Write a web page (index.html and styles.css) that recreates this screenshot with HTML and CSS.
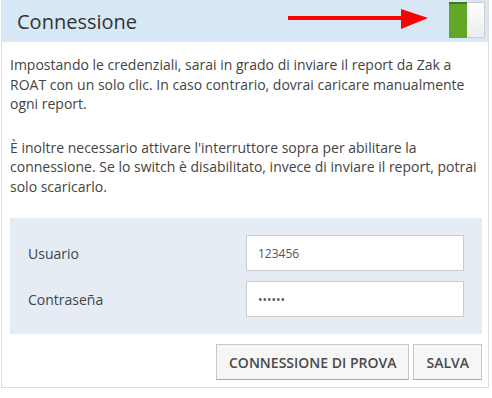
FILE: index.html
```html
<!DOCTYPE html>
<html lang="it">
<head>
    <meta charset="UTF-8">
    <meta name="viewport" content="width=device-width, initial-scale=1.0">
    <title>Connessione</title>
    <link rel="stylesheet" href="styles.css">
</head>
<body>
    <div class="panel">
        <div class="panel-heading">
            <h3>Connessione</h3>
            <svg class="arrow" width="142" height="22" viewBox="0 0 142 22">
                <rect x="0" y="7" width="116" height="4" fill="#f00"/>
                <polygon points="113,0 140,9 113,20" fill="#f00"/>
            </svg>
            <div class="switch">
                <span class="switch-on"></span>
                <span class="switch-off"></span>
            </div>
        </div>
        <div class="panel-body">
            <p>Impostando le credenziali, sarai in grado di inviare il report da Zak a ROAT con un solo clic. In caso contrario, dovrai caricare manualmente ogni report.</p>
            <p>È inoltre necessario attivare l'interruttore sopra per abilitare la connessione. Se lo switch è disabilitato, invece di inviare il report, potrai solo scaricarlo.</p>
            <form class="credentials">
                <label for="user">Usuario</label>
                <input type="text" id="user" value="123456">
                <label for="pass">Contraseña</label>
                <input type="password" id="pass" value="123456">
            </form>
            <div class="actions">
                <button type="button">Connessione di prova</button>
                <button type="button">Salva</button>
            </div>
        </div>
    </div>
</body>
</html>
```

FILE: styles.css
```css
body {
    font-family: "Open Sans", "Liberation Sans", sans-serif;
    margin: 0;
    background-color: #fff;
    color: #444;
}
.panel {
    width: 486px;
    margin-left: 1px;
    border: 1px solid #dcdcdc;
    border-top: none;
}
.panel-heading {
    position: relative;
    display: flex;
    align-items: center;
    justify-content: space-between;
    height: 42px;
    margin-left: -1px;
    padding: 0 3px 0 16px;
    background-color: #d8e7f5;
}
.panel-heading h3 {
    margin: 0;
    font-size: 20px;
    font-weight: 400;
    color: #333;
}
.arrow {
    position: absolute;
    left: 287px;
    top: 9px;
}
.switch {
    display: flex;
    width: 36px;
    height: 36px;
    margin-top: -3px;
}
.switch-on {
    flex: 1;
    background-color: #62a725;
    border-top: 2px solid #3f7a17;
}
.switch-off {
    flex: 1;
    background: linear-gradient(#fff, #ececec);
    border: 1px solid #cfcfcf;
    border-left: none;
}
.panel-body {
    padding: 13px 6px 7px 8px;
}
.panel-body p {
    margin: 0 0 24px;
    font-size: 14px;
    line-height: 19.5px;
}
.panel-body p + p {
    margin-bottom: 22px;
}
.credentials {
    display: grid;
    grid-template-columns: 1fr 218px;
    row-gap: 10px;
    align-items: center;
    padding: 17px 18px;
    background-color: #e5ecf4;
}
.credentials label {
    font-size: 14px;
    color: #444;
}
.credentials input {
    height: 36px;
    padding: 0 11px;
    border: 1px solid #ccc;
    box-sizing: border-box;
    font-family: inherit;
    font-size: 12px;
    color: #555;
    background: #fff;
}
.actions {
    display: flex;
    justify-content: flex-end;
    gap: 4px;
    margin-top: 10px;
}
.actions button {
    height: 36px;
    padding: 0 12px;
    border: 1px solid #c8c8c8;
    border-bottom-color: #aaa;
    background-color: #f6f6f6;
    font-family: inherit;
    font-size: 14px;
    font-weight: 600;
    text-transform: uppercase;
    color: #4a4a4a;
}
```
